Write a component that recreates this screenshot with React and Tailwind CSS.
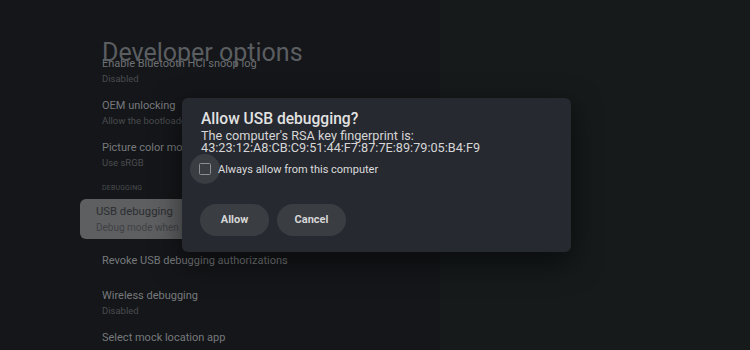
export default function App() {
  const font = { fontFamily: "Roboto, 'Noto Sans', sans-serif" };
  return (
    <div className="relative w-[750px] h-[350px] flex overflow-hidden" style={font}>
      <div className="w-[440px] h-full bg-[#141619] pl-[102px] pt-[39px]">
        <div className="text-[25px] leading-[28px] text-[#5b5e61] mb-[-11px] relative whitespace-nowrap">Developer options</div>
        <div className="flex flex-col">
          <div className="text-[11px] leading-[15px] text-[#6f7174]">Enable Bluetooth HCI snoop log</div>
          <div className="text-[9.5px] leading-[15px] text-[#4b4d50]">Disabled</div>

          <div className="mt-[12px] text-[11px] leading-[15px] text-[#77797c]">OEM unlocking</div>
          <div className="text-[9.5px] leading-[15px] text-[#4b4d50] whitespace-nowrap">Allow the bootloader to be unlocked</div>

          <div className="mt-[12px] text-[11px] leading-[15px] text-[#77797c] whitespace-nowrap">Picture color mode</div>
          <div className="text-[9.5px] leading-[15px] text-[#4b4d50]">Use sRGB</div>

          <div className="mt-[12px] text-[7px] leading-[12px] text-[#4b4d50] tracking-wide">DEBUGGING</div>

          <div className="mt-[5px] ml-[-22px] w-[170px] h-[40px] rounded-[6px] bg-[#5e5f61] pl-[16px] pt-[5px]">
            <div className="text-[11.3px] leading-[15px] text-[#2c2e31] whitespace-nowrap">USB debugging</div>
            <div className="mt-[1px] text-[10px] leading-[15px] text-[#3f4144] whitespace-nowrap">Debug mode when USB is connected</div>
          </div>

          <div className="mt-[14px] text-[11px] leading-[15px] text-[#77797c]">Revoke USB debugging authorizations</div>

          <div className="mt-[20px] text-[11px] leading-[15px] text-[#77797c]">Wireless debugging</div>
          <div className="text-[9.5px] leading-[15px] text-[#4b4d50]">Disabled</div>

          <div className="mt-[12px] text-[11px] leading-[15px] text-[#77797c]">Select mock location app</div>
        </div>
      </div>
      <div className="flex-1 h-full bg-[#161a1b]" />

      <div className="absolute left-[182px] top-[98px] w-[389px] h-[154px] rounded-[6px] bg-[#262930] shadow-[0_10px_30px_rgba(0,0,0,0.55)] pl-[19px] pt-[13px]">
        <div className="text-[15.6px] leading-[16px] font-medium text-[#e2e2e2] whitespace-nowrap">Allow USB debugging?</div>
        <div className="mt-[3px] text-[12.7px] leading-[12px] text-[#d6d6d6] whitespace-nowrap">The computer's RSA key fingerprint is:</div>
        <div className="text-[12.7px] leading-[12px] text-[#d6d6d6] whitespace-nowrap">43:23:12:A8:CB:C9:51:44:F7:87:7E:89:79:05:B4:F9</div>
        <div className="ml-[-11px] flex items-center h-[30px]">
          <div className="w-[30px] h-[30px] rounded-full bg-[#3a3d42] flex items-center justify-center">
            <div className="w-[12px] h-[12px] rounded-[1.5px] border-[1.5px] border-[#8d8f93]" />
          </div>
          <div className="ml-[-2px] text-[11px] leading-[15px] text-[#dcdcdc]">Always allow from this computer</div>
        </div>
        <div className="mt-[20px] ml-[-1px] flex gap-[8px]">
          <div className="w-[69px] h-[32px] rounded-full bg-[#3a3d42] flex items-center justify-center text-[11px] font-bold text-[#d6d6d6]">Allow</div>
          <div className="w-[69px] h-[32px] rounded-full bg-[#3a3d42] flex items-center justify-center text-[11px] font-bold text-[#d6d6d6]">Cancel</div>
        </div>
      </div>
    </div>
  );
}
